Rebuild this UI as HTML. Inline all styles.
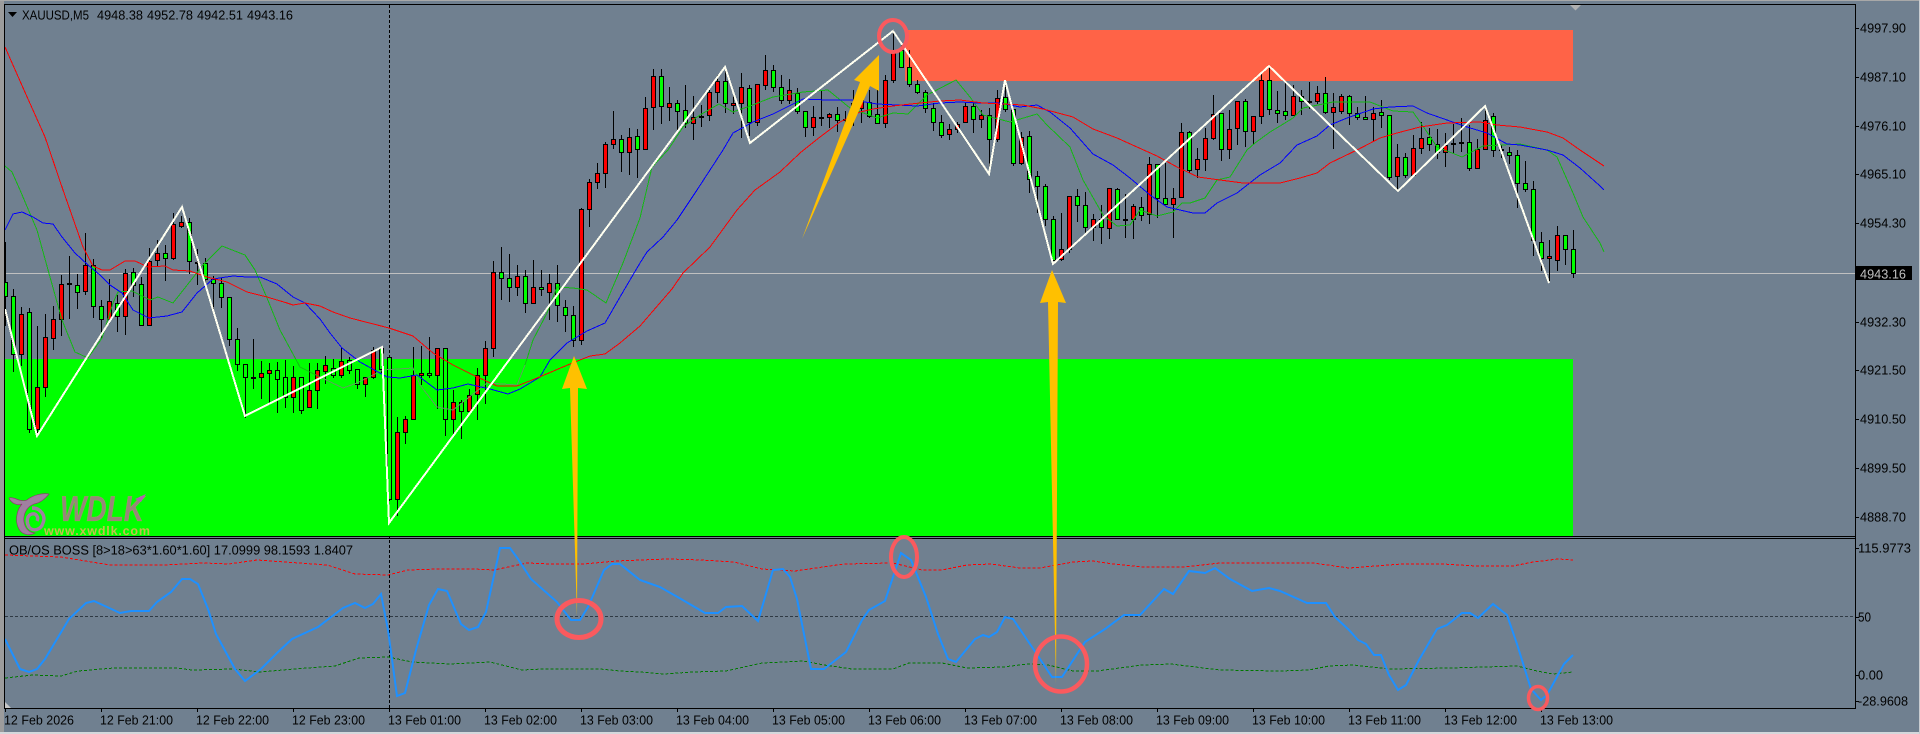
<!DOCTYPE html>
<html lang="en"><head><meta charset="utf-8"><title>XAUUSD,M5</title>
<style>
html,body{margin:0;padding:0;background:#708090;width:1920px;height:734px;overflow:hidden}
svg{display:block;position:absolute;left:0;top:0}
text{font-family:"Liberation Sans",sans-serif;font-size:13px;fill:#000;text-rendering:geometricPrecision}
.c{shape-rendering:crispEdges}
.ma{fill:none;stroke-width:1;shape-rendering:crispEdges}
</style></head><body>
<svg xmlns="http://www.w3.org/2000/svg" width="1920" height="734" viewBox="0 0 1920 734">
<rect width="1920" height="734" fill="#708090"/>
<!-- grid -->
<g class="c">
<line x1="389.5" y1="5" x2="389.5" y2="708" stroke="#000" stroke-dasharray="3 2"/>
<line x1="5" y1="273.5" x2="1855" y2="273.5" stroke="#c0c0c0"/>
<line x1="5" y1="616.5" x2="1855" y2="616.5" stroke="#2f3a44" stroke-dasharray="3 2"/>
<rect x="905" y="30" width="668" height="51" fill="#ff6347"/>
<rect x="5" y="359" width="1568" height="177" fill="#00ff00"/>
</g>
<!-- logo -->
<g>
<path d="M9 498C14 496 20 503 27 500C33 495 42 493 49 494C45 499 40 503 34 504C26 507 23 515 24 522C25 529 30 533 35 533C30 536 22 535 19 529C15 522 16 511 22 504C17 506 11 503 9 498Z" fill="#a080a0" stroke="#a0207a" stroke-width=".6"/>
<path d="M32 508C41 508 46 516 43 523C41 530 33 532 29 527C26 522 27 515 32 514C36 513 39 517 37 521" fill="none" stroke="#a080a0" stroke-width="3.4"/>
<text x="60" y="521" textLength="84" lengthAdjust="spacingAndGlyphs" style="font-size:36px;font-weight:bold;font-style:italic;fill:#96877a;stroke:#b0a45a;stroke-width:.3">WDLK</text>
<path d="M135 499L146 494L141 502Z" fill="#b060b0"/>
<text x="44" y="535" textLength="106" lengthAdjust="spacing" style="font-size:12.5px;font-weight:bold;fill:#c4c04e">www.xwdlk.com</text>
</g>
<g id="candles" class="c"></g>
<!-- moving averages -->
<polyline class="ma" stroke="#14b814" points="5,166 12,172 20,190 37,230 50,277 62,320 75,352 88,358 102,338 113,303 118,292 132,291 150,300 158,297 173,303 203,265 222,246 245,255 255,270 267,298 280,330 300,367 320,377"/>
<polyline class="ma" stroke="#5f9f5f" points="320,377 343,388 357,383 383,370 413,368 420,385 437,407 453,410 487,383 517,385 525,365"/>
<polyline class="ma" stroke="#14b814" points="525,365 533,340 547,313 557,287 573,288 587,290 606,303 623,263 640,218 652,167 668,150 683,127 700,115 719,104 733,112 750,106 773,97 803,92 828,90 850,108 877,118 893,113 908,114 927,95 956,80 970,97 983,115 1010,122 1037,114 1047,125 1070,147 1083,180 1103,215 1117,226 1130,225 1140,210 1157,216 1173,212 1182,203 1190,203 1205,198 1217,180 1230,177 1247,150 1255,143 1270,132 1280,126 1293,118 1303,108 1333,102 1370,102 1393,111 1413,112 1427,132 1437,147 1462,157 1483,146 1520,144 1547,150 1557,157 1573,193 1583,217 1600,243 1604,252"/>
<polyline class="ma" stroke="#0000ff" points="5,230 13,214 22,212 33,217 43,223 53,224 62,237 75,253 88,265 100,275 110,285 122,293 133,310 149,318 167,316 182,312 197,293 213,279 233,276 247,277 260,277 277,284 293,297 305,303 320,319 330,333 342,348 360,362 387,377 400,378 417,375 437,390 453,388 468,384 490,389 508,394 520,389 540,377 550,360 567,343 587,331 605,323 620,297 640,263 647,252 663,237 677,220 697,190 723,150 733,133 753,122 773,114 787,107 803,99 827,100 853,100 877,104 897,105 917,106 940,103 960,102 977,103 1000,103 1020,107 1037,105 1050,112 1070,128 1093,154 1113,165 1130,178 1150,195 1167,207 1193,213 1205,213 1217,203 1237,193 1260,175 1280,163 1297,145 1317,136 1330,125 1347,118 1373,109 1390,107 1413,106 1427,113 1447,120 1467,127 1487,133 1507,144 1520,145 1547,150 1563,155 1580,168 1600,186 1604,190"/>
<polyline class="ma" stroke="#ff0000" points="5,47 24,90 45,137 63,190 83,247 93,266 102,270 110,270 125,261 135,261 148,267 165,266 173,270 190,271 207,277 227,282 247,292 267,297 287,303 293,305 305,303 320,306 333,312 350,318 389,328 413,336 433,353 453,365 473,375 497,386 517,386 537,378 570,364 590,356 605,354 620,343 640,326 672,289 683,273 710,247 737,210 755,190 780,172 800,153 820,137 840,122 860,112 873,109 893,106 920,103 940,101 960,100 983,103 1023,105 1043,109 1073,117 1093,129 1117,138 1137,147 1157,156 1177,167 1198,177 1220,180 1243,183 1280,183 1300,178 1317,173 1330,163 1357,150 1380,138 1397,133 1420,127 1447,123 1480,122 1497,125 1520,127 1547,132 1563,138 1580,150 1604,166"/>
<!-- zigzag -->
<polyline fill="none" stroke="#fffff0" stroke-width="2" class="c" points="5,309 37,436 182,207 245,416 382,347 389,523 725,67 750,143 893,31 989,174 1005,80 1053,264 1269,66 1398,191 1485,106 1549,283"/>
<!-- indicator -->
<polyline class="ma" stroke="#ff0000" stroke-dasharray="3 2" points="5,555 61,557 110,565 163,565 204,563 229,564 257,560 327,565 355,574 388,575 408,570 437,569 473,569 494,570 527,563 551,564 584,564 616,561 640,560 669,559 701,560 734,562 762,569 795,571 844,564 893,563 922,570 942,570 967,565 991,564 1020,568 1040,568 1073,562 1093,561 1113,564 1142,567 1183,567 1220,563 1280,563 1313,563 1349,568 1402,564 1443,564 1476,566 1513,566 1533,562 1558,559 1573,560"/>
<polyline class="ma" stroke="#007800" stroke-dasharray="3 2" points="5,678 33,675 61,676 78,671 114,668 176,668 192,670 233,669 261,672 294,669 335,666 359,658 388,657 412,662 449,664 490,662 522,670 543,669 600,669 620,671 640,672 664,674 693,672 726,671 762,663 803,661 824,665 852,669 893,669 909,663 942,663 967,668 1003,667 1028,664 1048,665 1073,671 1097,671 1142,665 1171,664 1220,670 1280,671 1309,670 1329,666 1353,665 1390,669 1451,668 1517,666 1537,671 1553,674 1573,672"/>
<polyline fill="none" stroke="#1e90ff" stroke-width="2" points="5,639 20,669 29,672 37,669 45,659 69,619 86,603 94,601 120,613 131,611 149,611 157,602 171,592 182,579 190,579 198,584 208,609 216,634 235,669 245,681 261,669 278,652 292,639 318,627 343,608 355,603 365,608 373,604 381,594 388,630 397,696 405,693 416,650 429,605 438,589 447,591 461,624 469,630 478,627 486,612 500,548 510,548 518,559 531,579 557,602 571,620 580,620 588,607 604,570 612,564 620,564 640,580 660,587 681,599 705,613 718,613 726,607 742,606 758,621 773,570 783,569 790,577 797,599 811,669 824,669 846,652 862,620 869,610 885,601 901,553 911,560 926,597 938,634 948,659 956,662 975,639 983,635 989,637 997,632 1005,617 1013,619 1032,647 1052,677 1062,677 1085,642 1105,629 1124,615 1140,615 1164,589 1173,594 1189,571 1205,573 1215,568 1230,579 1252,591 1269,588 1280,591 1307,603 1326,603 1335,617 1349,630 1358,640 1366,644 1374,655 1381,655 1389,675 1398,690 1406,685 1419,660 1437,629 1447,625 1462,613 1470,613 1478,618 1493,604 1507,615 1517,644 1531,689 1541,700 1547,695 1564,664 1573,655"/>
<!-- frame -->
<g class="c">
<rect x="0" y="0" width="4" height="734" fill="#9c9c9c"/>
<rect x="0" y="0" width="1920" height="1" fill="#a8a8a8"/>
<rect x="0" y="732" width="1920" height="2" fill="#d4d8dc"/>
<rect x="1919" y="0" width="1" height="734" fill="#c8ccd0"/>
<rect x="4" y="4" width="1852" height="1" fill="#000"/>
<rect x="4" y="4" width="1" height="705" fill="#000"/>
<rect x="1855" y="4" width="1" height="705" fill="#000"/>
<rect x="4" y="536" width="1852" height="1" fill="#000"/>
<rect x="4" y="538" width="1852" height="1" fill="#000"/>
<rect x="4" y="708" width="1852" height="1" fill="#000"/>
<path id="tk" d="" stroke="#000" fill="none"/>
</g>
<path d="M8 12H17L12.500 17Z" fill="#000"/>
<path d="M1570 5H1581L1575.500 10.500Z" fill="#b0b0b0"/>
<path d="M5 702L11 708H5Z" fill="#c8c8c8"/>
<!-- arrows -->
<g fill="#ffc000">
<polygon points="574,356 587,389 578,388 577,617 570,388 562,389"/>
<polygon points="879,55 879,91 870,86 802,239 860,82 854,80"/>
<polygon points="1052,270 1066,303 1058,302 1056,684 1048,302 1040,303"/>
</g>
<!-- circles -->
<g fill="none" stroke="#fa5a5e">
<ellipse cx="893" cy="36" rx="14" ry="16" stroke-width="4"/>
<ellipse cx="579" cy="619" rx="22" ry="18.500" stroke-width="5"/>
<ellipse cx="904" cy="557" rx="13" ry="20" stroke-width="4"/>
<ellipse cx="1061" cy="664" rx="26" ry="27.500" stroke-width="4.500"/>
<ellipse cx="1538" cy="698" rx="9.500" ry="11.500" stroke-width="3.500"/>
</g>
<!-- price label -->
<rect x="1856" y="266" width="56" height="14" fill="#000"/>
<!-- text -->
<text x="22" y="19.500" textLength="67" lengthAdjust="spacingAndGlyphs">XAUUSD,M5</text>
<text x="97" y="19.500" textLength="46" lengthAdjust="spacingAndGlyphs">4948.38</text>
<text x="147" y="19.500" textLength="46" lengthAdjust="spacingAndGlyphs">4952.78</text>
<text x="197" y="19.500" textLength="46" lengthAdjust="spacingAndGlyphs">4942.51</text>
<text x="247" y="19.500" textLength="46" lengthAdjust="spacingAndGlyphs">4943.16</text>
<text x="9" y="554.500" textLength="344" lengthAdjust="spacingAndGlyphs">OB/OS BOSS [8&gt;18&gt;63*1.60*1.60] 17.0999 98.1593 1.8407</text>
<g>
<text x="1860" y="32.500" textLength="46" lengthAdjust="spacingAndGlyphs">4997.90</text>
<text x="1860" y="81.500" textLength="46" lengthAdjust="spacingAndGlyphs">4987.10</text>
<text x="1860" y="130.500" textLength="46" lengthAdjust="spacingAndGlyphs">4976.10</text>
<text x="1860" y="178.500" textLength="46" lengthAdjust="spacingAndGlyphs">4965.10</text>
<text x="1860" y="227.500" textLength="46" lengthAdjust="spacingAndGlyphs">4954.30</text>
<text x="1860" y="278.500" textLength="46" lengthAdjust="spacingAndGlyphs" style="fill:#c0c0c0">4943.16</text>
<text x="1860" y="326.500" textLength="46" lengthAdjust="spacingAndGlyphs">4932.30</text>
<text x="1860" y="374.500" textLength="46" lengthAdjust="spacingAndGlyphs">4921.50</text>
<text x="1860" y="423.500" textLength="46" lengthAdjust="spacingAndGlyphs">4910.50</text>
<text x="1860" y="472.500" textLength="46" lengthAdjust="spacingAndGlyphs">4899.50</text>
<text x="1860" y="521.500" textLength="46" lengthAdjust="spacingAndGlyphs">4888.70</text>
<text x="1858" y="552.500" textLength="53" lengthAdjust="spacingAndGlyphs">115.9773</text>
<text x="1858" y="621.500" textLength="13" lengthAdjust="spacingAndGlyphs">50</text>
<text x="1858" y="679.500" textLength="25" lengthAdjust="spacingAndGlyphs">0.00</text>
<text x="1858" y="705.500" textLength="50" lengthAdjust="spacingAndGlyphs">-28.9608</text>
</g>
<g>
<text x="4" y="724.500" textLength="70" lengthAdjust="spacingAndGlyphs">12 Feb 2026</text>
<text x="100" y="724.500" textLength="73" lengthAdjust="spacingAndGlyphs">12 Feb 21:00</text>
<text x="196" y="724.500" textLength="73" lengthAdjust="spacingAndGlyphs">12 Feb 22:00</text>
<text x="292" y="724.500" textLength="73" lengthAdjust="spacingAndGlyphs">12 Feb 23:00</text>
<text x="388" y="724.500" textLength="73" lengthAdjust="spacingAndGlyphs">13 Feb 01:00</text>
<text x="484" y="724.500" textLength="73" lengthAdjust="spacingAndGlyphs">13 Feb 02:00</text>
<text x="580" y="724.500" textLength="73" lengthAdjust="spacingAndGlyphs">13 Feb 03:00</text>
<text x="676" y="724.500" textLength="73" lengthAdjust="spacingAndGlyphs">13 Feb 04:00</text>
<text x="772" y="724.500" textLength="73" lengthAdjust="spacingAndGlyphs">13 Feb 05:00</text>
<text x="868" y="724.500" textLength="73" lengthAdjust="spacingAndGlyphs">13 Feb 06:00</text>
<text x="964" y="724.500" textLength="73" lengthAdjust="spacingAndGlyphs">13 Feb 07:00</text>
<text x="1060" y="724.500" textLength="73" lengthAdjust="spacingAndGlyphs">13 Feb 08:00</text>
<text x="1156" y="724.500" textLength="73" lengthAdjust="spacingAndGlyphs">13 Feb 09:00</text>
<text x="1252" y="724.500" textLength="73" lengthAdjust="spacingAndGlyphs">13 Feb 10:00</text>
<text x="1348" y="724.500" textLength="73" lengthAdjust="spacingAndGlyphs">13 Feb 11:00</text>
<text x="1444" y="724.500" textLength="73" lengthAdjust="spacingAndGlyphs">13 Feb 12:00</text>
<text x="1540" y="724.500" textLength="73" lengthAdjust="spacingAndGlyphs">13 Feb 13:00</text>
</g>
</svg>
<script>
var D="g 242 282 296 325,g 289 296 354 371,r 307 314 354 365,g 308 312 429 432,r 326 387 429 432,r 314 337 387 396,r 306 319 338 349,r 275 284 319 335,r 256 283 284 318,g 274 285 292 308,r 233 265 291 294,g 259 265 306 317,g 300 306 319 337,r 279 301 319 323,g 295 303 316 331,r 269 273 316 334,g 268 272 285 296,g 277 284 325 325,r 248 261 325 325,r 240 253 260 266,g 245 253 258 280,r 213 224 258 259,r 216 222 226 227,g 218 222 261 273,r 249 262 263 284,g 258 263 279 284,g 276 279 283 308,g 278 283 297 307,g 297 297 339 345,g 328 339 364 370,g 364 364 377 417,r 339 377 377 388,r 361 373 377 398,r 363 370 373 404,g 362 370 379 412,g 360 377 397 407,r 366 377 397 412,g 377 377 410 413,r 363 390 407 407,r 363 370 390 408,r 356 365 371 383,g 359 368 375 377,r 348 361 375 377,g 357 360 370 373,g 369 369 384 388,r 377 377 384 396,r 347 350 377 378,g 347 348 369 372,g 357 357 499 500,r 417 432 499 515,r 416 419 432 443,r 347 375 419 419,r 346 373 375 384,g 337 373 375 377,r 348 348 375 408,g 348 348 419 435,r 390 402 419 435,g 400 402 411 438,r 389 395 411 411,r 368 375 394 419,r 341 348 375 403,r 261 272 348 356,g 247 272 278 299,g 254 278 287 301,r 265 276 287 295,g 270 276 303 312,r 260 287 303 303,g 270 287 289 295,r 274 283 292 319,g 265 283 305 321,g 300 307 315 331,g 306 315 340 346,r 208 209 340 344,r 179 182 209 226,r 163 173 182 188,r 142 144 173 187,r 111 139 144 148,g 135 139 152 171,r 128 137 152 174,g 129 136 149 177,r 97 108 149 149,r 69 76 107 129,g 69 76 106 123,r 87 103 107 120,g 100 103 111 130,g 85 110 123 127,r 96 117 123 139,r 105 116 116 126,r 90 92 115 120,r 75 81 92 102,g 67 81 103 112,r 95 103 105 113,r 73 87 103 137,g 85 88 122 135,r 84 84 122 125,r 55 70 85 89,g 65 70 87 91,g 75 87 100 103,r 79 90 100 103,g 88 93 111 113,g 111 111 127 136,r 106 117 127 135,r 90 117 117 125,r 113 114 117 127,g 107 114 120 131,r 111 119 119 123,r 90 103 115 125,r 92 100 108 122,g 90 102 116 117,g 90 114 123 123,r 75 80 123 127,r 30 52 80 82,g 45 50 67 67,g 50 67 84 86,g 80 84 92 93,g 90 92 108 112,g 103 108 122 130,g 115 122 135 137,r 124 129 134 139,r 122 124 129 132,r 102 106 122 122,g 103 106 119 132,r 110 115 119 127,g 108 115 139 173,r 90 98 139 141,g 80 97 109 111,g 109 109 163 165,r 132 137 163 164,g 131 136 179 192,g 171 176 186 212,g 184 186 219 225,g 216 219 260 260,r 213 249 259 260,r 196 196 249 252,g 189 196 205 221,g 192 205 227 233,r 214 219 227 240,g 205 219 227 243,r 188 188 228 238,g 188 189 219 219,r 194 219 219 237,r 204 206 219 238,g 197 207 215 220,r 157 164 214 223,g 164 164 198 217,g 163 198 204 204,r 188 198 204 237,r 123 132 197 197,g 131 132 170 172,r 148 159 169 177,r 128 138 159 170,r 95 114 138 139,g 113 113 149 160,r 110 129 149 158,r 101 101 128 144,g 99 101 131 146,r 116 116 131 143,r 74 80 116 123,g 67 80 109 114,g 91 110 113 122,g 82 111 115 119,r 85 96 115 115,g 90 96 101 114,r 82 101 101 108,r 86 93 101 103,g 77 93 112 113,r 93 107 112 148,r 94 96 111 113,g 95 96 113 124,g 107 113 117 119,g 96 117 119 119,r 107 113 119 141,g 100 112 115 127,g 115 115 177 179,r 144 157 176 190,g 153 157 175 177,r 135 148 175 175,r 122 138 148 153,g 128 137 144 150,g 129 144 152 158,r 133 145 152 166,r 124 143 143 152,r 118 142 142 151,g 125 142 168 170,r 139 149 168 168,r 106 120 149 149,g 113 116 150 156,r 145 149 149 157,g 147 152 155 163,g 150 155 183 207,g 161 183 189 191,g 181 189 240 255,g 232 242 258 270,r 240 256 258 280,r 226 235 260 270,g 235 235 249 264,g 230 249 273 277".split(",");
var s="";
for(var k=0;k<D.length;k++){
  var p=D[k].split(" "),x=5+8*k,h=+p[1],t=+p[2],b=+p[3],l=+p[4];
  var f=p[0]=="g"?"#00ff00":"#ff0000";
  s+='<line x1="'+(x+.5)+'" x2="'+(x+.5)+'" y1="'+h+'" y2="'+(l+1)+'" stroke="#000"/>';
  if(t==b){s+='<rect x="'+(x-2)+'" y="'+t+'" width="5" height="2" fill="#000"/>';}
  else{s+='<rect x="'+(x-1.5)+'" y="'+(t+.5)+'" width="4" height="'+(b-t)+'" fill="'+f+'" stroke="#000"/>';}
}
document.getElementById("candles").innerHTML=s;
var d="";
for(var i=0;i<17;i++){d+="M"+(5.5+96*i)+" 708V712";}
[28,77,126,174,223,322,370,419,468,517,548,617,675,701].forEach(function(y){d+="M1856 "+(y+.5)+"H1859";});
document.getElementById("tk").setAttribute("d",d);
</script>
</body></html>
